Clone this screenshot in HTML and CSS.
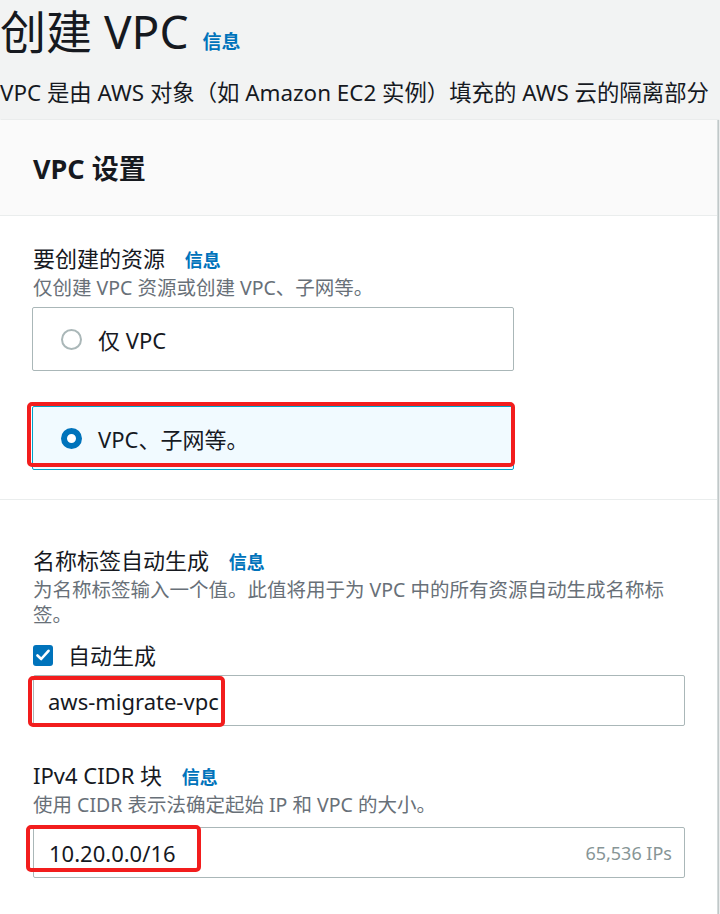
FILE: index.html
```html
<!DOCTYPE html>
<html lang="zh">
<head>
    <meta charset="UTF-8">
    <meta name="viewport" content="width=device-width, initial-scale=1.0">
    <title>创建 VPC</title>
    <link rel="stylesheet" href="styles.css">
</head>
<body>
    <div class="page-head">
        <h1>创建 VPC <a class="info title-info">信息</a></h1>
        <p class="page-desc">VPC 是由 AWS 对象（如 Amazon EC2 实例）填充的 AWS 云的隔离部分</p>
    </div>

    <div class="panel">
        <div class="panel-head">
            <h2>VPC 设置</h2>
        </div>

        <div class="section">
            <div class="label">要创建的资源 <a class="info">信息</a></div>
            <div class="desc">仅创建 VPC 资源或创建 VPC、子网等。</div>
            <div class="tiles">
                <div class="tile">
                    <span class="radio"></span>
                    <span>仅 VPC</span>
                </div>
                <div class="tile selected">
                    <span class="radio"></span>
                    <span>VPC、子网等。</span>
                    <span class="mark mark-tile"></span>
                </div>
            </div>
        </div>

        <div class="section section-last">
            <div class="label">名称标签自动生成 <a class="info">信息</a></div>
            <div class="desc">为名称标签输入一个值。此值将用于为 VPC 中的所有资源自动生成名称标签。</div>
            <div class="check-row">
                <span class="checkbox">
                    <svg width="14" height="12" viewBox="0 0 14 12">
                        <path d="M1.5 6.5 L5.2 10 L12.5 1.8" fill="none" stroke="#fff" stroke-width="2.6" stroke-linecap="round" stroke-linejoin="round"/>
                    </svg>
                </span>
                <span>自动生成</span>
            </div>
            <div class="input">
                <span>aws-migrate-vpc</span>
                <span class="mark mark-name"></span>
            </div>

            <div class="label label-cidr">IPv4 CIDR 块 <a class="info">信息</a></div>
            <div class="desc">使用 CIDR 表示法确定起始 IP 和 VPC 的大小。</div>
            <div class="input input-cidr">
                <span>10.20.0.0/16</span>
                <span class="hint">65,536 IPs</span>
                <span class="mark mark-cidr"></span>
            </div>
        </div>
    </div>
</body>
</html>
```

FILE: styles.css
```css
* {
    margin: 0;
    padding: 0;
    box-sizing: border-box;
}

body {
    margin: 0;
    overflow: hidden;
    background-color: #f2f3f3;
    color: #16191f;
    font-family: "Noto Sans", "Noto Sans CJK SC", sans-serif;
}

.info {
    color: #0073bb;
    font-weight: 700;
    font-size: 18px;
    margin-left: 14px;
}

/* 页面标题 */
.page-head {
    height: 120px;
    padding-top: 1px;
    white-space: nowrap;
    overflow: hidden;
}

.page-head h1 {
    font-size: 46px;
    font-weight: 400;
    line-height: 60px;
}

.title-info {
    font-size: 19px;
    margin-left: 2px;
}

.page-desc {
    font-size: 22.4px;
    line-height: 30px;
    margin-top: 6px;
}

/* 面板 */
.panel {
    width: 718px;
    min-height: 800px;
    background-color: #fff;
    border-right: 1px solid #d5dbdb;
    box-shadow: 1px 0 1px rgba(0, 28, 36, 0.2);
}

.panel-head {
    height: 96px;
    display: flex;
    align-items: center;
    padding-left: 33px;
    background-color: #fafafa;
    border-bottom: 1px solid #eaeded;
}

.panel-head h2 {
    font-size: 27px;
    font-weight: 700;
}

.section {
    padding: 27px 32px 29px 33px;
    border-bottom: 1px solid #eaeded;
}

.section-last {
    border-bottom: none;
    padding-top: 45px;
}

.label {
    font-size: 22px;
    line-height: 30px;
}

.label-cidr {
    margin-top: 34px;
}

.desc {
    font-size: 19.5px;
    line-height: 25px;
    color: #687078;
}

/* 单选卡片 */
.tiles {
    display: flex;
    flex-direction: column;
    gap: 35px;
    margin-top: 7px;
}

.tile {
    position: relative;
    width: 482px;
    height: 64px;
    margin-left: -1px;
    display: flex;
    align-items: center;
    gap: 16px;
    padding-left: 28px;
    border: 1px solid #aab7b8;
    border-radius: 2px;
    font-size: 22px;
}

.tile.selected {
    background-color: #f1faff;
    border-color: #00a1c9;
}

.radio {
    width: 21px;
    height: 21px;
    border-radius: 50%;
    border: 2px solid #aab7b8;
    background-color: #fff;
}

.selected .radio {
    border: 6px solid #0073bb;
}

/* 复选框 */
.check-row {
    display: flex;
    align-items: center;
    gap: 15px;
    margin-top: 13px;
    font-size: 22px;
    line-height: 30px;
}

.checkbox {
    width: 20px;
    height: 21px;
    border-radius: 3px;
    background-color: #0073bb;
    display: flex;
    align-items: center;
    justify-content: center;
}

/* 输入框 */
.input {
    position: relative;
    height: 51px;
    margin-top: 5px;
    display: flex;
    align-items: center;
    justify-content: space-between;
    padding: 0 12px 0 14px;
    border: 1px solid #aab7b8;
    border-radius: 2px;
    font-size: 22px;
}

.input-cidr {
    margin-top: 10px;
    padding-left: 15px;
}

.hint {
    font-size: 18px;
    color: #879596;
}

/* 红色标注框 */
.mark {
    position: absolute;
    border: 4px solid #f21d1d;
    border-radius: 5px;
}

.mark-tile {
    left: -6px;
    top: -5px;
    width: 488px;
    height: 65px;
}

.mark-name {
    left: -6px;
    top: 0;
    width: 197px;
    height: 51px;
}

.mark-cidr {
    left: -8px;
    top: -3px;
    width: 175px;
    height: 47px;
}
```
